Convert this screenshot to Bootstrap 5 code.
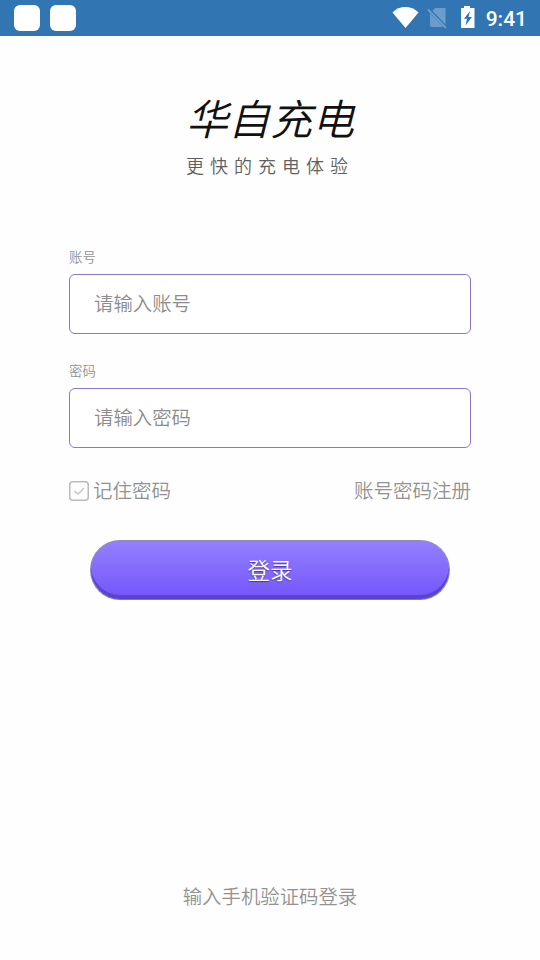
<!DOCTYPE html>
<html lang="zh-CN">
<head>
<meta charset="utf-8">
<meta name="viewport" content="width=device-width, initial-scale=1">
<title>华自充电</title>
<link href="https://cdn.jsdelivr.net/npm/bootstrap@5.3.0/dist/css/bootstrap.min.css" rel="stylesheet">
<style>
body { font-family: "Noto Sans CJK SC", sans-serif; font-weight: 350; background: #fefefe; color: #929292; height: 960px; overflow: hidden; }
.status-bar { height: 36px; background: #3176b3; padding: 0 13px 0 14px; }
.app-dots { gap: 10px; }
.app-dot { width: 26px; height: 26px; border-radius: 6px; background: #fff; }
.clock { font: 500 21px/36px Roboto, sans-serif; color: #fff; margin-left: 10px; padding-top: 1px; }
.brand { font-size: 42px; line-height: 60px; font-style: italic; font-weight: 350; color: #111; margin-top: 51px; }
.slogan { font-size: 18px; line-height: 26px; letter-spacing: 6px; color: #606060; margin-top: 5px; }
.login-form { margin: 68px 69px 0; }
.field-label { font-size: 13.4px; line-height: 20px; height: 28px; }
.field-input, .field-input:focus { height: 60px; border: 1px solid #8b76ca; border-radius: 6px; padding: 0 24px 3px; font-size: 19.4px; font-weight: 350; background: #fff; color: #666; box-shadow: none; }
.field-input::placeholder { color: #8c8c8c; opacity: 1; }
.second-field { margin-top: 26px; }
.options-row { font-size: 19.5px; line-height: 30px; margin-top: 28px; }
.option-text { margin-top: -1px; margin-bottom: 1px; }
.login-btn, .login-btn:hover { width: 360px; height: 60px; border: 1px solid #9189b9; border-bottom-color: #8174aa; border-radius: 30px; background: linear-gradient(#9380fe, #7455fa); color: #fff; font-size: 22.5px; font-weight: 350; line-height: 30px; padding: 0 0 2px; box-shadow: inset 0 -4px 0 #5b43ce; text-shadow: 0 1px 1px #4c35a3; margin-top: 34px; }
.sms-link { font-size: 19.4px; line-height: 30px; padding-bottom: 49px; }
</style>
<script src="https://cdn.jsdelivr.net/npm/bootstrap@5.3.0/dist/js/bootstrap.bundle.min.js"></script>
</head>
<body class="d-flex flex-column">
<header class="status-bar d-flex align-items-center flex-shrink-0">
  <div class="app-dots d-flex me-auto">
    <span class="app-dot"></span>
    <span class="app-dot"></span>
  </div>
  <svg width="84" height="36" viewBox="0 0 84 36" aria-hidden="true">
    <path d="M.5 12.500C7.500 5.300 19 5.300 26.500 12.500L13.500 28z" fill="#fff"/>
    <path d="M43 8H53.500V24.500L40.500 11zM38 13.500L51.500 27H40Q38 27 38 25z" fill="#6b9dca"/>
    <path d="M36 9.500L54 28" stroke="#6b9dca" stroke-width="1.800" fill="none"/>
    <path d="M69 8h3V6h6v2h4.500v20H69z" fill="#fff"/>
    <path d="M78 11L72 18.800H75L73.500 25.500L80 17H76.500z" fill="#3176b3"/>
  </svg>
  <span class="clock">9:41</span>
</header>
<main class="d-flex flex-column flex-grow-1">
  <div class="text-center">
    <h1 class="brand mb-0">华自充电</h1>
    <p class="slogan mb-0">更快的充电体验</p>
  </div>
  <form class="login-form">
    <label class="field-label d-block" for="account">账号</label>
    <input class="form-control field-input" id="account" type="text" placeholder="请输入账号">
    <label class="field-label second-field d-block" for="password">密码</label>
    <input class="form-control field-input" id="password" type="password" placeholder="请输入密码">
    <div class="options-row d-flex justify-content-between align-items-center">
      <span class="d-flex align-items-center gap-1">
        <svg width="20" height="20" viewBox="0 0 20 20" fill="none" aria-hidden="true">
          <rect x=".75" y=".75" width="18.500" height="18.500" rx="3" stroke="#bbb" stroke-width="1.500"/>
          <path d="M5.500 10L9 13L15 7" stroke="#c4c4c4" stroke-width="1.300"/>
        </svg>
        <span class="option-text">记住密码</span>
      </span>
      <span class="option-text">账号密码注册</span>
    </div>
    <div class="text-center"><button class="btn login-btn" type="button">登录</button></div>
  </form>
  <div class="sms-link text-center mt-auto">输入手机验证码登录</div>
</main>
</body>
</html>
